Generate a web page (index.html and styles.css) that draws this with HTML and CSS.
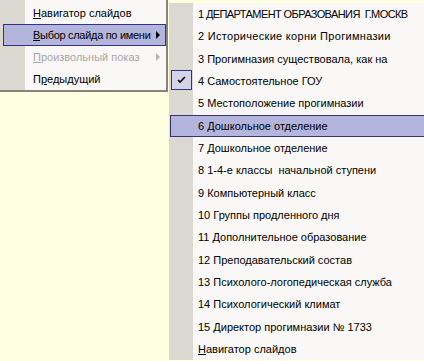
FILE: index.html
```html
<!DOCTYPE html>
<html lang="ru">
<head>
  <meta charset="UTF-8" />
  <title>Выбор слайда</title>
  <link rel="stylesheet" href="styles.css">
</head>
<body>
  <div class="desk">
    <ul class="menu main">
      <li><u>Н</u>авигатор слайдов</li>
      <li class="active"><span class="tight"><u>В</u>ыбор слайда по имени</span> <span class="arrow"></span></li>
      <li class="disabled"><u>П</u>роизвольный показ <span class="arrow"></span></li>
      <li>П<u>р</u>едыдущий</li>
    </ul>

    <ul class="menu sub">
      <li class="caps">1 ДЕПАРТАМЕНТ ОБРАЗОВАНИЯ&nbsp; Г.МОСКВ</li>
      <li class="wide">2 Исторические корни Прогимназии</li>
      <li>3 Прогимназия существовала, как на</li>
      <li class="checked"><span class="check"><svg width="9" height="8" viewBox="0 0 9 8"><path d="M1 4 L3 6 L8 1" fill="none" stroke="#000" stroke-width="1.6"/></svg></span>4 Самостоятельное ГОУ</li>
      <li>5 Местоположение прогимназии</li>
      <li class="active">6 Дошкольное отделение</li>
      <li>7 Дошкольное отделение</li>
      <li>8 1-4-е классы&nbsp; начальной ступени</li>
      <li>9 Компьютерный класс</li>
      <li>10 Группы продленного дня</li>
      <li>11 Дополнительное образование</li>
      <li>12 Преподавательский состав</li>
      <li>13 Психолого-логопедическая служба</li>
      <li>14 Психологический климат</li>
      <li>15 Директор прогимназии № 1733</li>
      <li><u>Н</u>авигатор слайдов</li>
    </ul>
  </div>
</body>
</html>
```

FILE: styles.css
```css
body {
  margin: 0;
  background: #ffffe1;
  font-family: "Liberation Sans", Arial, sans-serif;
  font-size: 11px;
  color: #000;
  overflow: hidden;
}
.desk {
  display: flex;
  align-items: flex-start;
  gap: 1px;
  width: 560px;
  height: 361px;
}
.menu {
  list-style: none;
  margin: 0;
  background: linear-gradient(to right, #dbd8d1 0, #dbd8d1 var(--gutter), #f9f8f7 var(--gutter));
}
.menu li {
  display: flex;
  align-items: center;
  position: relative;
  border: 1px solid transparent;
  white-space: nowrap;
}
.menu li.active {
  background: #b4b5dc;
  border-color: #34347e;
}
.menu u {
  text-decoration: underline;
  text-underline-offset: 1px;
}

.main {
  --gutter: 25px;
  width: 163px;
  padding: 2px 0 0 3px;
  border-right: 2px solid #878377;
  border-bottom: 2px solid #878377;
}
.main li {
  height: 20px;
  padding-left: 29px;
}
.main li.disabled {
  color: #a8a7a3;
}
.tight {
  letter-spacing: -0.3px;
}
.arrow {
  margin-left: auto;
  margin-right: 5px;
  width: 0;
  height: 0;
  border-top: 4px solid transparent;
  border-bottom: 4px solid transparent;
  border-left: 4px solid #000;
}
.disabled .arrow {
  border-left-color: #b5b4b0;
}

.sub {
  --gutter: 24px;
  width: 380px;
  margin-top: 3px;
  padding: 0 0 0 1px;
}
.sub li {
  height: 20.33px;
  padding-left: 27px;
}
.sub li.caps {
  letter-spacing: -0.6px;
}
.sub li.wide {
  letter-spacing: 0.3px;
}
.check {
  position: absolute;
  left: 0;
  top: -1px;
  width: 21px;
  height: 20px;
  box-sizing: border-box;
  border: 1px solid #34347e;
  background: #d3d4ea;
  display: flex;
  align-items: center;
  justify-content: center;
}
```
